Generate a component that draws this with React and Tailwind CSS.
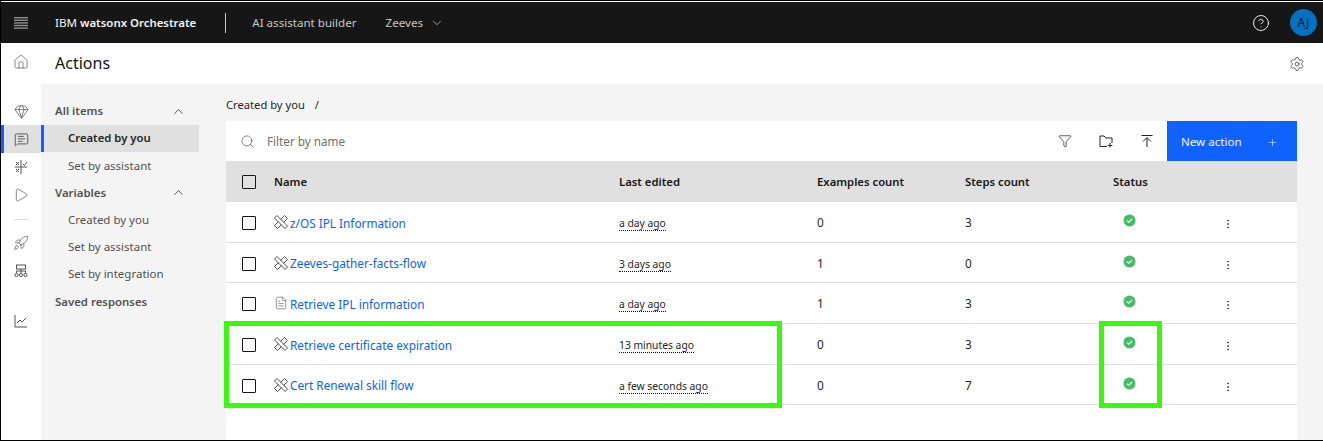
import { ChevronDown, ChevronUp, Search, Settings, Plus, MoreVertical, CircleHelp, Home, Gem, MessageSquareText, Play, Rocket, Funnel, FileText } from 'lucide-react';

const font = 'font-["Noto_Sans","Liberation_Sans",sans-serif]';

const rows = [
  { name: 'z/OS IPL Information', edited: 'a day ago', examples: 0, steps: 3, icon: 'tools' },
  { name: 'Zeeves-gather-facts-flow', edited: '3 days ago', examples: 1, steps: 0, icon: 'tools' },
  { name: 'Retrieve IPL information', edited: 'a day ago', examples: 1, steps: 3, icon: 'doc' },
  { name: 'Retrieve certificate expiration', edited: '13 minutes ago', examples: 0, steps: 3, icon: 'tools' },
  { name: 'Cert Renewal skill flow', edited: 'a few seconds ago', examples: 0, steps: 7, icon: 'tools' },
];

const gridCols = 'grid grid-cols-[48px_345px_198px_148px_148px_115px_1fr] items-center';

function ToolsIcon() {
  return (
    <svg width="14" height="14" viewBox="0 0 14 14" fill="none" stroke="#525252" strokeWidth="1" className="mt-[1px]">
      <path d="M0.500 3L3 0.500 13.500 11 11 13.500z" />
      <path d="M6.500 4.500L10.500 0.500 13.500 3.500 9.500 7.500" />
      <path d="M4.500 6.500L0.500 10.500 3.500 13.500 7.500 9.500" />
    </svg>
  );
}

function StatusCheck() {
  return (
    <svg width="13" height="13" viewBox="0 0 13 13">
      <circle cx="6.500" cy="6.500" r="6" fill="#42be65" />
      <path d="M3.800 6.600l1.900 1.700 3.400-3.300" fill="none" stroke="#fff" strokeWidth="1.200" />
    </svg>
  );
}

function AnalyticsIcon() {
  return (
    <svg width="14" height="14" viewBox="0 0 14 14" fill="none" stroke="#525252" strokeWidth="1">
      <path d="M1 1v12h12" />
      <path d="M3 9l3-3 2 2 4-4" />
    </svg>
  );
}

function FlowIcon() {
  return (
    <svg width="14" height="14" viewBox="0 0 14 14" fill="none" stroke="#525252" strokeWidth="1">
      <rect x="2.500" y="1" width="9" height="4" />
      <path d="M7 5v4M2.500 9V7h9v2" />
      <circle cx="2.500" cy="11" r="1.600" />
      <circle cx="7" cy="11" r="1.600" />
      <circle cx="11.500" cy="11" r="1.600" />
    </svg>
  );
}

function IntentIcon() {
  return (
    <svg width="14" height="14" viewBox="0 0 14 14" fill="none" stroke="#525252" strokeWidth="1">
      <path d="M7 0v14M1 7h12" />
      <path d="M2 2l3 3M5 2L2 5M2 9l3 3M5 9l-3 3M9 4l1.500 1.500L13 2" />
    </svg>
  );
}

function FolderAddIcon() {
  return (
    <svg width="14" height="14" viewBox="0 0 14 14" fill="none" stroke="#262626" strokeWidth="1">
      <path d="M8 12.500H1V2h4l2 2h6v5" />
      <path d="M11 9v4.500M8.800 11.500h4.500" />
    </svg>
  );
}

function UploadIcon() {
  return (
    <svg width="14" height="14" viewBox="0 0 14 14" fill="none" stroke="#262626" strokeWidth="1">
      <path d="M1.500 1.500h11M7 13V4M3 7.500L7 3.500l4 4" />
    </svg>
  );
}

function MenuIcon() {
  return (
    <svg width="14" height="12" viewBox="0 0 14 12" fill="#8d8d8d">
      <rect y="0" width="14" height="1.400" />
      <rect y="2.600" width="14" height="1.400" />
      <rect y="5.200" width="14" height="1.400" />
      <rect y="7.800" width="14" height="1.400" />
      <rect y="10.400" width="14" height="1.400" />
    </svg>
  );
}

function RailItem({ children, active }) {
  return (
    <div className={`h-7 flex items-center justify-center ${active ? 'bg-[#e0e0e0] border-l-[3px] border-[#0f62fe] pr-[3px]' : ''}`}>
      {children}
    </div>
  );
}

function SideHead({ label, chevron, className = '' }) {
  return (
    <div className={`h-[27px] pl-[14px] pr-[13px] flex items-center justify-between text-[11.400px] font-semibold text-[#525252] ${className}`}>
      <span>{label}</span>
      {chevron && <ChevronUp size={15} strokeWidth={1.25} color="#262626" />}
    </div>
  );
}

function SideLink({ label, active }) {
  if (active) {
    return (
      <div className="h-[27px] pl-[24px] flex items-center text-[11.300px] bg-[#e0e0e0] border-l-[3px] border-[#0f62fe] font-semibold text-[#262626]">
        {label}
      </div>
    );
  }
  return <div className="h-[27px] pl-[27px] flex items-center text-[11.500px] text-[#525252]">{label}</div>;
}

export default function App() {
  return (
    <div className={`${font} relative w-[1323px] h-[441px] overflow-hidden bg-white border-l border-b border-black flex flex-col`}>
      <div className="h-[2px] bg-white border-t border-black" />
      <header className="h-[41px] shrink-0 bg-[#161616] flex items-center text-[11.600px] text-[#c6c6c6]">
        <div className="ml-[13px] w-[41px]"><MenuIcon /></div>
        <span className="text-[#f4f4f4] whitespace-nowrap">IBM <span className="font-semibold text-[11.400px]">watsonx Orchestrate</span></span>
        <div className="ml-[29px] h-[20px] w-px bg-[#c6c6c6]" />
        <span className="ml-[26px]">AI assistant builder</span>
        <span className="ml-[29px]">Zeeves</span>
        <ChevronDown size={14} strokeWidth={1.25} className="ml-[7px]" />
        <CircleHelp size={18} strokeWidth={1.25} color="#f4f4f4" className="ml-auto" />
        <div className="ml-[20px] mr-[6px] w-[27px] h-[27px] rounded-full bg-[#0072c3] text-[#161616] flex items-center justify-center text-xs tracking-wide">AJ</div>
      </header>

      <div className="flex-1 flex min-h-0">
        <nav className="w-[40px] shrink-0 bg-white pt-[5px]">
          <RailItem><Home size={16} strokeWidth={1} color="#525252" /></RailItem>
          <div className="h-[21px]" />
          <RailItem><Gem size={15} strokeWidth={1} color="#393939" /></RailItem>
          <RailItem active><MessageSquareText size={15} strokeWidth={1.1} color="#262626" /></RailItem>
          <RailItem><IntentIcon /></RailItem>
          <RailItem><Play size={16} strokeWidth={1} color="#525252" /></RailItem>
          <div className="mx-[13px] mt-[10px] mb-[9px] h-px bg-[#e0e0e0]" />
          <RailItem><Rocket size={16} strokeWidth={1} color="#525252" /></RailItem>
          <RailItem><FlowIcon /></RailItem>
          <div className="h-[22px]" />
          <RailItem><AnalyticsIcon /></RailItem>
        </nav>

        <main className="flex-1 flex flex-col min-w-0">
          <div className="h-[41px] shrink-0 bg-white flex items-center justify-between pl-[14px] pr-[18px]">
            <h1 className="text-base text-[#161616] -mt-[2px]">Actions</h1>
            <Settings size={16} strokeWidth={1} color="#262626" />
          </div>

          <div className="flex-1 flex bg-[#f4f4f4] min-h-0">
            <aside className="w-[158px] shrink-0 pt-[14px]">
              <SideHead label="All items" chevron className="-mt-[1px] h-[28px]" />
              <SideLink label="Created by you" active />
              <SideLink label="Set by assistant" />
              <SideHead label="Variables" chevron />
              <SideLink label="Created by you" />
              <SideLink label="Set by assistant" />
              <SideLink label="Set by integration" />
              <SideHead label="Saved responses" className="h-[29px]" />
            </aside>

            <section className="ml-[27px] w-[1071px] shrink-0 flex flex-col min-h-0">
              <div className="h-[37px] shrink-0 pt-[6px] flex items-center text-[11.200px] text-[#262626]">
                <span>Created by you</span>
                <span className="ml-[10px]">/</span>
              </div>

              <div className="h-[40px] shrink-0 bg-white flex items-center">
                <Search size={15} strokeWidth={1.1} color="#525252" className="ml-[14px]" />
                <span className="ml-[12px] pt-[2px] text-[11.700px] text-[#6f6f6f]">Filter by name</span>
                <Funnel size={14} strokeWidth={1.25} color="#262626" className="ml-auto" />
                <div className="ml-[27px]"><FolderAddIcon /></div>
                <div className="ml-[27px]"><UploadIcon /></div>
                <button className="ml-[13px] w-[130px] h-full bg-[#0f62fe] text-[#f4f4f4] text-[11.600px] pt-[2px] flex items-center justify-between pl-[14px] pr-[19px]">
                  New action
                  <Plus size={11} strokeWidth={1.25} />
                </button>
              </div>

              <div className={`${gridCols} h-[41px] shrink-0 bg-[#e0e0e0] text-[11.300px] font-semibold text-[#161616]`}>
                <span className="ml-[16px] w-[14px] h-[14px] border border-[#161616] rounded-[1px]" />
                <span className="pt-[2px]">Name</span>
                <span className="pt-[2px]">Last edited</span>
                <span className="pt-[2px]">Examples count</span>
                <span className="pt-[2px]">Steps count</span>
                <span className="pt-[2px]">Status</span>
                <span />
              </div>

              <div className="flex-1 bg-white">
                {rows.map((row) => (
                  <div key={row.name} className={`${gridCols} h-[40.700px] border-b border-[#e0e0e0] text-[11.800px] text-[#262626]`}>
                    <span className="ml-[16px] mt-[2px] w-[14px] h-[14px] border border-[#161616] rounded-[1px]" />
                    <div className="flex items-center gap-[2px]">
                      {row.icon === 'tools' ? <ToolsIcon /> : <FileText size={14} strokeWidth={1} color="#525252" />}
                      <a className="pt-[3px] text-[#0f62fe]">{row.name}</a>
                    </div>
                    <div className="pt-[2px]">
                      <span className="text-[10.300px] border-b border-dotted border-[#161616]">{row.edited}</span>
                    </div>
                    <span className="pt-[2px]">{row.examples}</span>
                    <span className="pt-[2px]">{row.steps}</span>
                    <div className="ml-[10px] -mt-[3px] flex"><StatusCheck /></div>
                    <MoreVertical size={12} strokeWidth={1.5} color="#262626" className="-ml-[6px] mt-[4px]" />
                  </div>
                ))}
              </div>
            </section>
          </div>
        </main>
      </div>

      {/* green highlight boxes drawn on top of the screenshot */}
      <div className="absolute left-[223px] top-[321px] w-[558px] h-[87px] border-[5px] border-[#39f90c]" />
      <div className="absolute left-[1098px] top-[321px] w-[63px] h-[87px] border-[5px] border-[#39f90c]" />
    </div>
  );
}
